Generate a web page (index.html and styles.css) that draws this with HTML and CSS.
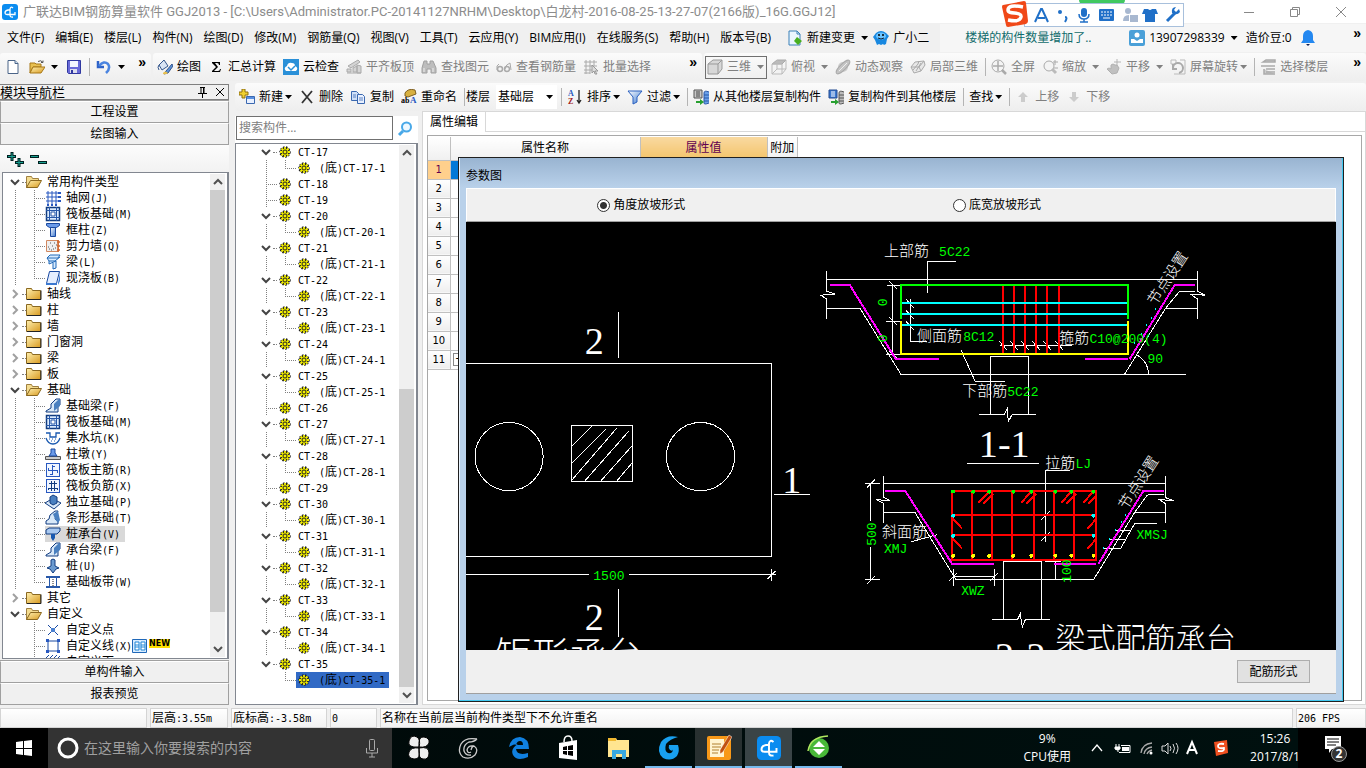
FILE: index.html
```html
<!DOCTYPE html>
<html lang="zh-CN">
<head>
    <meta charset="UTF-8">
    <meta name="viewport" content="width=device-width, initial-scale=1.0">
    <title>广联达BIM钢筋算量软件 GGJ2013</title>
    <link rel="stylesheet" href="styles.css">
</head>
<body>

    <!-- Icon sprite -->
    <svg class="sprite" width="0" height="0">
        <linearGradient id="gold" x1="0" y1="0" x2="1" y2="1"><stop offset="0" stop-color="#fff0b0"/><stop offset="1" stop-color="#d89a20"/></linearGradient>
        <linearGradient id="blue" x1="0" y1="0" x2="1" y2="1"><stop offset="0" stop-color="#fff"/><stop offset="1" stop-color="#3a78d0"/></linearGradient>
        <symbol id="logo" viewBox="0 0 16 16"><rect width="16" height="16" rx="3" fill="#0a8cf0"/><path d="M11 4Q8.500 2 8 5v6q0 2.500 3 2M8 6H6Q3 6.500 3 9q0 1.500 2 1.500h8V8" fill="none" stroke="#fff" stroke-width="1.300"/></symbol>
        <symbol id="new" viewBox="0 0 16 16"><path d="M3 1.500h7l3 3v10H3z" fill="#fff" stroke="#4a6488"/><path d="M10 1.500v3h3" fill="#cfe0f4" stroke="#4a6488"/></symbol>
        <symbol id="open" viewBox="0 0 16 16"><path d="M1 4h5l1 1h5v3H4l-3 6z" fill="#e8c050" stroke="#a87818"/><path d="M4 8h12l-4 6H1z" fill="url(#gold)" stroke="#a87818"/><path d="M9 2.500q3-2 5 1m0-2v2h-2" fill="none" stroke="#555"/></symbol>
        <symbol id="save" viewBox="0 0 16 16"><path d="M1.500 1.500h13v13h-12l-1-1z" fill="#6a6ad8" stroke="#3038a0"/><path d="M4 2h8v6H4z" fill="#f4f6ff"/><path d="M4 10h7v4H4z" fill="#dde"/><path d="M5 11h2v3H5z" fill="#3038a0"/></symbol>
        <symbol id="undo" viewBox="0 0 16 16"><path d="M2 2v6h6" fill="none" stroke="#2d62c8" stroke-width="2.500"/><path d="M3 7q5-6 9-2 3 4-2 9" fill="none" stroke="#4a84e0" stroke-width="2.500"/></symbol>
        <symbol id="paint" viewBox="0 0 16 16"><path d="M2 6l5-5 4 6-6 4z" fill="#d8e4f4" stroke="#34568c"/><path d="M2 6q-2 2 0 5" fill="none" stroke="#34568c"/><path d="M15 5l-6 7-2 3 4-1 5-7z" fill="#5a90d8" stroke="#34568c"/><path d="M6 14q2-3 5 0-2 2-5 1z" fill="#e8c050"/></symbol>
        <symbol id="sigma" viewBox="0 0 16 16"><path d="M4 3h8v3h-1q0-2-2-2H7l3 4-4 4h4q2 0 2-2h1l-1 3H4v-1l4-4-4-4z"/></symbol>
        <symbol id="cloud" viewBox="0 0 16 16"><rect width="16" height="16" fill="#2a90d8"/><path d="M3 12q-3-3 1-5 1-4 5-3 3 0 3 3 4 2 1 5z" fill="#fff"/><path d="M5 8l3 3 4-4" fill="none" stroke="#2a90d8" stroke-width="1.500"/></symbol>
        <symbol id="slab" viewBox="0 0 16 16"><path d="M2 7l10-6 2 2-9 6zM1 10h4v3H1zM7 9l4-2v6H7zM11 6l4 1v7h-4zM1 14h14" fill="#d4d4d4" stroke="#aaa"/></symbol>
        <symbol id="bino" viewBox="0 0 16 16"><path d="M3 2h3v3h3V2h3l3 7v5h-5v-4H6v4H1V9z" fill="#bdbdbd" stroke="#a0a0a0"/><path d="M3 9v4m9-4v4" stroke="#eee"/></symbol>
        <symbol id="glasses" viewBox="0 0 16 16"><path d="M3 5q-3 1-2 6m8-1q1-5 5-6l1 7" fill="none" stroke="#aaa"/><circle cx="4" cy="10" r="2.500" fill="none" stroke="#aaa" stroke-width="1.500"/><circle cx="11" cy="10" r="2.500" fill="none" stroke="#aaa" stroke-width="1.500"/></symbol>
        <symbol id="gridsel" viewBox="0 0 16 16"><path d="M1 3h13M1 7h13M1 11h8M1 14h6M3 1v14M7 1v14M11 1v6" stroke="#aaa" fill="none"/><path d="M9 6l6 6-3 0 2 3-2 0-1-3-2 2z" fill="#ddd" stroke="#999"/></symbol>
        <symbol id="cube" viewBox="0 0 16 16"><path d="M1 5l5-4h9v9l-4 5H1z" fill="#d8d8d8" stroke="#999"/><path d="M1 5h10v10M11 5l4-4" fill="none" stroke="#999"/></symbol>
        <symbol id="cubetop" viewBox="0 0 16 16"><path d="M1 5l5-4h9l-4 4z" fill="#bbb" stroke="#aaa"/><path d="M1 5h10v10H1zM15 1v9l-4 5M6 1v9h9M6 10l-5 5" fill="none" stroke="#bbb"/></symbol>
        <symbol id="orbit" viewBox="0 0 16 16"><circle cx="8" cy="8" r="5" fill="#ccc"/><ellipse cx="8" cy="8" rx="9" ry="3" transform="rotate(-45 8 8)" fill="#c4c4c4" stroke="#aaa"/><path d="M4 12l8-8" stroke="#eee"/></symbol>
        <symbol id="part" viewBox="0 0 16 16"><path d="M1 8l4-5 9-1 1 4-4 6-7 2z" fill="#e8e8e8" stroke="#aaa"/><path d="M3 11l5-6 1-3M6 12l5-8M1 8h8l5-6M9 8l2 4" fill="none" stroke="#aaa"/></symbol>
        <symbol id="full" viewBox="0 0 16 16"><circle cx="7" cy="7" r="6" fill="#f4f4f4" stroke="#aaa"/><path d="M7 2v10M2 7h10" stroke="#aaa" stroke-width="1.500"/><path d="M11 11l4 4" stroke="#aaa" stroke-width="2.500"/></symbol>
        <symbol id="zoomi" viewBox="0 0 16 16"><circle cx="7" cy="7" r="5" fill="#f4f4f4" stroke="#aaa"/><path d="M10 10l4 4" stroke="#bbb" stroke-width="3"/><path d="M11 3h5M13 1v5M12 9h4" stroke="#aaa"/></symbol>
        <symbol id="hand" viewBox="0 0 16 16"><path d="M1 10l2-1 2 1V6l2-1 2 1 2 0 2 3-2 5-5 1z" fill="#c0c0c0" stroke="#b0b0b0"/><path d="M11 0v7M8 3h7" stroke="#b4b4b4"/></symbol>
        <symbol id="rotate" viewBox="0 0 16 16"><path d="M1 1h5v4H1zM10 1h5v14H4" fill="none" stroke="#bbb"/><path d="M3 9a5 5 0 1 1 6 5M3 5v5h4" fill="none" stroke="#aaa" stroke-width="2"/></symbol>
        <symbol id="floors" viewBox="0 0 16 16"><path d="M3 3l3-2h9v2zM1 7h3M4 7h11M6 10h9M4 10v5h11M6 13h9" fill="#ccc" stroke="#aaa" stroke-width="1.500"/></symbol>
        <symbol id="add" viewBox="0 0 16 16"><path d="M3 0h3v3h3v3H6v3H3V6H0V3h3z" fill="#f0d030" stroke="#907010"/><path d="M7.500 7.500h8v7h-8z" fill="#e8f0ff" stroke="#3a68b0"/><path d="M8 8h7v2H8z" fill="#5a90e0"/></symbol>
        <symbol id="del" viewBox="0 0 16 16"><path d="M3 2l10 12M13 2L3 14" stroke="#333" stroke-width="1.800"/></symbol>
        <symbol id="copy" viewBox="0 0 16 16"><path d="M1.500 2.500h5l2 2v7h-7z" fill="#cfe0f8" stroke="#3a68b0"/><path d="M7.500 5.500h5l2 2v7h-7z" fill="#e8f0ff" stroke="#3a68b0"/><path d="M9 9h4M9 11h4M3 6h3M3 8h3" stroke="#5a80c0"/></symbol>
        <symbol id="rename" viewBox="0 0 16 16"><path d="M4 4q3-5 10-3l1 4-8 3-3-1z" fill="#d8b040" stroke="#806020"/><text x="0" y="14" font-size="8" font-weight="bold" font-family="Liberation Serif, serif">ab</text><text x="9" y="14" font-size="9" font-weight="bold" fill="#2858c0" font-family="Liberation Serif, serif">A</text></symbol>
        <symbol id="sort" viewBox="0 0 16 16"><text x="1" y="7" font-size="8" font-weight="bold" fill="#2858c0" font-family="Liberation Serif, serif">A</text><text x="1" y="15" font-size="8" font-weight="bold" fill="#a02020" font-family="Liberation Serif, serif">Z</text><path d="M12 1v13M10 11l2 3 2-3" fill="none" stroke="#222" stroke-width="1.300"/></symbol>
        <symbol id="filter" viewBox="0 0 16 16"><path d="M1 2h14l-5 6v5l-4 2V8z" fill="url(#blue)" stroke="#2a60c0"/></symbol>
        <symbol id="cfrom" viewBox="0 0 16 16"><path d="M1 1h8v8H1z" fill="#c8c8c8" stroke="#555"/><path d="M3 3h4M3 5h4M3 7h4" stroke="#444"/><path d="M16 3q-5-2-5 1v10q0 2 5 0M11 6h5M11 9h5M11 12h5" fill="#6aa0e8" stroke="#2858a8"/><path d="M3 12h4v-2l4 3-4 3v-2H3z" fill="#28a030"/></symbol>
        <symbol id="cto" viewBox="0 0 16 16"><path d="M1 1h8v8H1z" fill="#3a78d0" stroke="#224a90"/><path d="M3 3h4M3 5h4M3 7h4" stroke="#fff"/><path d="M16 3q-5-2-5 1v10q0 2 5 0M11 6h5M11 9h5M11 12h5" fill="#bbb" stroke="#555"/><path d="M3 12h4v-2l4 3-4 3v-2H3z" fill="#28a030"/></symbol>
        <symbol id="up" viewBox="0 0 16 16"><path d="M8 3l5 5h-3v5H6V8H3z" fill="#ccc"/></symbol>
        <symbol id="down" viewBox="0 0 16 16"><path d="M8 13l5-5h-3V3H6v5H3z" fill="#ccc"/></symbol>
        <symbol id="change" viewBox="0 0 16 16"><path d="M2 1h8l3 3v11H2z" fill="#eaf6ff" stroke="#3a80b8"/><path d="M10 1v3h3" fill="none" stroke="#3a80b8"/><path d="M10 7l5 4-4 4-4-4z" fill="#48b020"/></symbol>
        <symbol id="robot" viewBox="0 0 16 16"><path d="M3 3q5-4 10 0l3 3-2 3-1 5-2 1-1-1-2 1-2-1-2 1-2-5-2-3z" fill="#1888e0"/><ellipse cx="8" cy="6" rx="5" ry="3.500" fill="#6cc4ff"/><circle cx="6" cy="5" r="1"/><circle cx="10" cy="5" r="1"/><path d="M5 8q3 2 6 0" fill="none" stroke="#123"/></symbol>
        <symbol id="user" viewBox="0 0 16 16"><rect width="16" height="16" rx="2" fill="#4aa0d8"/><circle cx="8" cy="5" r="2.500" fill="#fff"/><path d="M2 13V9h3l3 2 3-2h3v4z" fill="#fff"/></symbol>
        <symbol id="bell" viewBox="0 0 16 16"><path d="M8 0q5 1 5 6v4l2 3H1l2-3V6q0-5 5-6z" fill="#2488f0"/><path d="M6 14h4l-2 2z" fill="#125"/></symbol>
        <symbol id="search" viewBox="0 0 16 16"><circle cx="9.500" cy="6" r="4.500" fill="#eef8ff" stroke="#48a8e8" stroke-width="2"/><path d="M6 10l-4 4" stroke="#48a8e8" stroke-width="3"/></symbol>
        <symbol id="chev-open" viewBox="0 0 14 16"><path d="M3 6l4 4 4-4" fill="none" stroke="#444" stroke-width="2"/></symbol>
        <symbol id="chev-shut" viewBox="0 0 14 16"><path d="M5 4l4 4-4 4" fill="none" stroke="#a0a0a0" stroke-width="2"/></symbol>
        <symbol id="folder-shut" viewBox="0 0 16 16"><path d="M.5 2.500h5l1 2h8v9H.5z" fill="url(#gold)" stroke="#8a6820"/><path d="M1 13.500h14v-9" fill="none" stroke="#222"/></symbol>
        <symbol id="folder-open" viewBox="0 0 16 16"><path d="M.5 2.500h5l1 2h6v3h-8l-4 6z" fill="#f4dc90" stroke="#a08040"/><path d="M4.500 6.500h11l-4 7H.5z" fill="url(#gold)" stroke="#8a6820"/></symbol>
        <symbol id="gear" viewBox="0 0 16 16"><circle cx="8" cy="8" r="5" fill="#222" stroke="#222" stroke-width="1.500" stroke-dasharray="1.500 1.500"/><path d="M8 3v10M3 8h10M4.500 4.500l7 7M11.500 4.500l-7 7" stroke="#f4f000" stroke-width="1.800"/><circle cx="8" cy="8" r="2" fill="#f4f000" stroke="#222"/></symbol>
        <symbol id="i-axis" viewBox="0 0 16 16"><path d="M1 3h14M1 7h14M1 11h14M3 1v14M7 1v14M11 1v14" stroke="#2858c0" fill="none"/><path d="M13 2h3v2h-3zM13 6h3v2h-3zM13 10h3v2h-3zM2 14h2v2H2zM6 14h2v2H6zM10 14h2v2h-2z" fill="#2858c0"/></symbol>
        <symbol id="i-raft" viewBox="0 0 16 16"><rect x="1.500" y="1.500" width="13" height="13" fill="#dcecff" stroke="#123c80" stroke-width="1.500"/><path d="M4.500 1v14M11.500 1v14M1 4.500h14M1 11.500h14" stroke="#2858a8"/><path d="M6 6h4v4H6z" fill="#fff" stroke="#2858a8"/></symbol>
        <symbol id="i-col" viewBox="0 0 16 16"><path d="M1.500 1.500h13v2l-3 2h-7l-3-2z" fill="#6a9ae8" stroke="#1848a0"/><path d="M5.500 5.500h5v9h-5z" fill="url(#blue)" stroke="#1848a0"/></symbol>
        <symbol id="i-wall" viewBox="0 0 16 16"><path d="M1.500 2.500h12v11h-12z" fill="#eee" stroke="#d08860"/><path d="M3 9h1M5 5h1M7 8h1M9 5h1M11 7h1M4 11h1M8 11h1M10 10h1M6 12h1" stroke="#555"/><path d="M13 2v12M15 4h-3M15 8h-3M15 12h-3" stroke="#d06830" stroke-width="1.500"/></symbol>
        <symbol id="i-beam" viewBox="0 0 16 16"><path d="M2 4l3-3h10l-2 3zM2 4l2 3h6l5-4M4 7v3l7-3M8 9v6l3-1V7" fill="#d8ecff" stroke="#2068b8"/></symbol>
        <symbol id="i-slab" viewBox="0 0 16 16"><path d="M4.500 1.500h10l-3 12h-10z" fill="#e4eeff" stroke="#1848a0"/><path d="M1 13h11v2H1zM13 13l2-10v8l-2 4z" fill="#3a78d0"/></symbol>
        <symbol id="i-fbeam" viewBox="0 0 16 16"><path d="M1 14h12V9l2-2V1h-4L6 6v4l-5 3z" fill="#d8e8f8" stroke="#123c80"/><path d="M9 6l5-5 1 1v6l-6 5z" fill="#4a80c0"/></symbol>
        <symbol id="i-pit" viewBox="0 0 16 16"><path d="M1 3h4v4h6V3h4M1 8q2 6 7 6t7-6" fill="none" stroke="#1858b0" stroke-width="1.300"/><path d="M4 9h1M7 9h1M10 9h1M6 11h1M9 11h1" stroke="#1858b0"/></symbol>
        <symbol id="i-pier" viewBox="0 0 16 16"><path d="M.5 10.500h15v3H.5z" fill="#ccc" stroke="#555"/><path d="M4 10l2-3V3h4v4l2 3z" fill="#6a9ae8" stroke="#1848a0"/></symbol>
        <symbol id="i-main" viewBox="0 0 16 16"><rect x="1.500" y="1.500" width="13" height="13" fill="#f0f6ff" stroke="#2858c0"/><path d="M7.500 3v10M3 8.500h10M3.500 6v3M12.500 8v3M8 4.500h2M5 12.500h2" stroke="#2858c0" fill="none"/></symbol>
        <symbol id="i-neg" viewBox="0 0 16 16"><rect x="1.500" y="1.500" width="13" height="13" fill="#f0f6ff" stroke="#2858c0"/><path d="M4 5.500h8M3 10.500h10M3.500 10v2M12.500 10v2M6.500 3v10M9.500 3v10" stroke="#123c80" fill="none"/></symbol>
        <symbol id="i-iso" viewBox="0 0 16 16"><path d="M0 9l5-3h5l6 3-7 6z" fill="#d8e8f8" stroke="#123c80"/><path d="M5 3l3-2 4 2v6L8 11 5 9z" fill="#4a80c0" stroke="#123c80"/></symbol>
        <symbol id="i-strip" viewBox="0 0 16 16"><path d="M1 14v-3l3-2 1-4 5-4h3l-3 8 3 2v3z" fill="#d8e8f8" stroke="#123c80"/><path d="M8 4l5-3 2 9-2 3-3-4z" fill="#4a80c0"/></symbol>
        <symbol id="i-cap" viewBox="0 0 16 16"><path d="M1 4l3-2h11v3l-3 3H1z" fill="#a8c8f0" stroke="#123c80"/><path d="M6 8h4v4l-2 3-2-3z" fill="#1858b0"/></symbol>
        <symbol id="i-pile" viewBox="0 0 16 16"><path d="M6 2q2-2 4 0v6l4 2-3 1-3 4-3-4-3-1 4-2z" fill="#6a9ad0" stroke="#123c80"/></symbol>
        <symbol id="i-band" viewBox="0 0 16 16"><path d="M1 3h14M1 13h14" stroke="#2858a8" stroke-width="2"/><path d="M4.500 4v8M11.500 4v8" stroke="#2858a8"/><path d="M8 5v7" stroke="#222" stroke-dasharray="1 1"/></symbol>
        <symbol id="i-point" viewBox="0 0 16 16"><path d="M3 3l10 10M13 3L3 13" stroke="#1848a0"/><path d="M6 6h4v4H6z" fill="#4a80d0"/></symbol>
        <symbol id="i-line" viewBox="0 0 16 16"><path d="M3 3h10v10H3z" fill="none" stroke="#1848a0"/><path d="M1 1h3v3H1zM12 1h3v3h-3zM1 12h3v3H1zM12 12h3v3h-3z" fill="#2858c0"/></symbol>
        <symbol id="i-face" viewBox="0 0 16 16"><path d="M1 4l3-3M5 4l3-3M9 4l3-3M13 4l2-2" stroke="#1848a0"/></symbol>
    </svg>

    <header class="titlebar">
        <svg class="ico"><use href="#logo"/></svg>
        <span class="caption">广联达BIM钢筋算量软件 GGJ2013 - [C:\Users\Administrator.PC-20141127NRHM\Desktop\白龙村-2016-08-25-13-27-07(2166版)_16G.GGJ12]</span>
        <button class="win-btn" aria-label="最小化"><svg width="12" height="12"><path d="M1 6.500h10" stroke="#888"/></svg></button>
        <button class="win-btn" aria-label="还原"><svg width="12" height="12"><path d="M1.500 3.500h7v7h-7zM3.500 3V1.500h7v7H9" fill="none" stroke="#888"/></svg></button>
        <button class="win-btn" aria-label="关闭"><svg width="12" height="12"><path d="M1 1l10 10M11 1L1 11" stroke="#888"/></svg></button>
        <div class="blob"></div>
        <div class="ime">
            <svg class="ime-logo" width="28" height="28" viewBox="0 0 28 28"><path d="M2 5l21-4q2 0 2 2l2 18q0 2-2 3L7 27q-2 0-2-2L1 7q0-2 1-2z" fill="#f04818"/><path d="M22 7Q7 4 7 10c0 5 14 1 13 7-1 5-8 4-13 3" fill="none" stroke="#fff" stroke-width="3.500"/></svg>
            <svg width="150" height="20" viewBox="0 0 150 20">
                <path d="M2 17L8 4h1l6 13M5 13h7" fill="none" stroke="#2070c8" stroke-width="2"/>
                <circle cx="27" cy="7" r="2" fill="#2070c8"/><path d="M32 12q3 0 0 5" fill="none" stroke="#2070c8" stroke-width="2"/>
                <rect x="48" y="3" width="6" height="9" rx="3" fill="#2070c8"/><path d="M46 9q0 5 5 5t5-5M51 14v3M47 17h8" fill="none" stroke="#2070c8" stroke-width="1.500"/>
                <rect x="66" y="4" width="15" height="12" rx="1" fill="#2070c8"/><path d="M68 7h11M68 10h11" stroke="#fff" stroke-dasharray="2 1"/><path d="M70 13h7" stroke="#fff"/>
                <circle cx="95" cy="6" r="3" fill="#a8b8d0"/><path d="M90 16q0-6 6-6v6zM97 10h8v7h-8z" fill="#a8b8d0"/>
                <path d="M111 4h4q2 2 4 0h4l2 5h-3v8h-10V9h-3z" fill="#2070c8"/>
                <path d="M134 16l8-8" stroke="#2070c8" stroke-width="3"/><path d="M146 4l-3 3-2-2 2-3q-5 0-4 6 5 3 8-1z" fill="#2070c8"/>
            </svg>
        </div>
    </header>

    <nav class="menubar">
        <button>文件(F)</button><button>编辑(E)</button><button>楼层(L)</button><button>构件(N)</button><button>绘图(D)</button><button>修改(M)</button><button>钢筋量(Q)</button><button>视图(V)</button><button>工具(T)</button><button>云应用(Y)</button><button>BIM应用(I)</button><button>在线服务(S)</button><button>帮助(H)</button><button>版本号(B)</button>
        <button class="tool change"><svg class="ico"><use href="#change"/></svg>新建变更<i class="caret"></i></button>
        <button class="tool"><svg class="ico"><use href="#robot"/></svg>广小二</button>
        <div class="account">
            <a href="#" class="news">楼梯的构件数量增加了..</a>
            <button class="tool phone"><svg class="ico"><use href="#user"/></svg>13907298339<i class="caret"></i></button>
            <button>造价豆:0</button>
            <button class="bell" aria-label="消息"><svg class="ico"><use href="#bell"/></svg></button>
            <span class="more">»</span>
        </div>
    </nav>

    <div class="toolbars">
        <div class="toolbar bar-file">
            <button class="tool" aria-label="新建"><svg class="ico"><use href="#new"/></svg></button>
            <button class="tool" aria-label="打开"><svg class="ico"><use href="#open"/></svg><i class="caret"></i></button>
            <button class="tool" aria-label="保存"><svg class="ico"><use href="#save"/></svg></button>
            <i class="sep"></i>
            <button class="tool" aria-label="撤销"><svg class="ico"><use href="#undo"/></svg><i class="caret"></i></button>
            <span class="more">»</span>
        </div>
        <div class="toolbar bar-draw">
            <button class="tool"><svg class="ico"><use href="#paint"/></svg>绘图</button>
            <button class="tool"><svg class="ico"><use href="#sigma"/></svg>汇总计算</button>
            <button class="tool"><svg class="ico"><use href="#cloud"/></svg>云检查</button>
            <button class="tool off"><svg class="ico"><use href="#slab"/></svg>平齐板顶</button>
            <button class="tool off"><svg class="ico"><use href="#bino"/></svg>查找图元</button>
            <button class="tool off"><svg class="ico"><use href="#glasses"/></svg>查看钢筋量</button>
            <button class="tool off"><svg class="ico"><use href="#gridsel"/></svg>批量选择</button>
            <span class="more">»</span>
        </div>
        <div class="toolbar bar-view">
            <button class="tool off boxed"><svg class="ico"><use href="#cube"/></svg>三维<i class="caret"></i></button>
            <button class="tool off"><svg class="ico"><use href="#cubetop"/></svg>俯视<i class="caret"></i></button>
            <button class="tool off"><svg class="ico"><use href="#orbit"/></svg>动态观察</button>
            <button class="tool off"><svg class="ico"><use href="#part"/></svg>局部三维</button>
            <i class="sep"></i>
            <button class="tool off"><svg class="ico"><use href="#full"/></svg>全屏</button>
            <button class="tool off"><svg class="ico"><use href="#zoomi"/></svg>缩放<i class="caret"></i></button>
            <button class="tool off"><svg class="ico"><use href="#hand"/></svg>平移<i class="caret"></i></button>
            <button class="tool off tight"><svg class="ico"><use href="#rotate"/></svg>屏幕旋转<i class="caret"></i></button>
            <i class="sep"></i>
            <button class="tool off"><svg class="ico"><use href="#floors"/></svg>选择楼层</button>
            <span class="more">»</span>
        </div>
    </div>

    <div class="workspace">
        <!-- Module navigation -->
        <aside class="nav-panel">
            <div class="nav-head"><span>模块导航栏</span>
                <svg width="28" height="12"><path d="M3 1.500h5M4 1v6M7 1v6M6.500 1v6M1 7.500h9M5.500 8v4M19 2l8 8M27 2l-8 8" fill="none" stroke="#000"/></svg>
            </div>
            <button class="nav-btn">工程设置</button>
            <button class="nav-btn">绘图输入</button>
            <div class="nav-tools">
                <svg width="40" height="16"><path d="M5 0v9M0 4.500h9M12 6v9M8 10.500h9M23 4.500h9M31 10.500h9" stroke="#002020" stroke-width="3"/><path d="M5 1v7M1 4.500h7M12 7v7M9 10.500h7M24 4.500h7M32 10.500h7" stroke="#18a090"/></svg>
            </div>
            <div class="tree-box">
                <ul class="tree" id="nav-tree"></ul>
                <div class="scroll nav-scroll"><svg width="15" height="16"><path d="M4 10l4-4 4 4" fill="none" stroke="#505050" stroke-width="2"/></svg><div class="thumb"></div><svg width="15" height="16"><path d="M4 6l4 4 4-4" fill="none" stroke="#505050" stroke-width="2"/></svg></div>
            </div>
            <button class="nav-btn">单构件输入</button>
            <button class="nav-btn">报表预览</button>
        </aside>

        <div class="right-side">
            <div class="toolbar bar-comp">
                <button class="tool tight"><svg class="ico"><use href="#add"/></svg>新建<i class="caret"></i></button>
                <button class="tool"><svg class="ico"><use href="#del"/></svg>删除</button>
                <button class="tool"><svg class="ico"><use href="#copy"/></svg>复制</button>
                <button class="tool"><svg class="ico"><use href="#rename"/></svg>重命名</button>
                <i class="sep"></i>
                <label for="floor">楼层</label>
                <span class="combo"><select id="floor"><option>基础层</option><option>首层</option></select><i class="caret"></i></span>
                <i class="sep"></i>
                <button class="tool tight"><svg class="ico"><use href="#sort"/></svg>排序<i class="caret"></i></button>
                <button class="tool tight"><svg class="ico"><use href="#filter"/></svg>过滤<i class="caret"></i></button>
                <i class="sep"></i>
                <button class="tool"><svg class="ico"><use href="#cfrom"/></svg>从其他楼层复制构件</button>
                <button class="tool"><svg class="ico"><use href="#cto"/></svg>复制构件到其他楼层</button>
                <i class="sep"></i>
                <button class="tool tight">查找<i class="caret"></i></button>
                <i class="sep"></i>
                <button class="tool off"><svg class="ico"><use href="#up"/></svg>上移</button>
                <button class="tool off"><svg class="ico"><use href="#down"/></svg>下移</button>
            </div>

            <div class="panels">
                <section class="comp-panel">
                    <div class="search-row">
                        <input type="text" placeholder="搜索构件..." aria-label="搜索构件">
                        <button aria-label="搜索"><svg class="ico"><use href="#search"/></svg></button>
                    </div>
                    <div class="tree-box">
                        <ul class="tree" id="comp-tree"></ul>
                        <div class="scroll comp-scroll"><svg width="15" height="16"><path d="M4 10l4-4 4 4" fill="none" stroke="#505050" stroke-width="2"/></svg><div class="thumb"></div><svg width="15" height="16"><path d="M4 6l4 4 4-4" fill="none" stroke="#505050" stroke-width="2"/></svg></div>
                    </div>
                </section>

                <section class="prop-panel">
                    <div class="tabs"><button class="tab">属性编辑</button></div>
                    <div class="prop-box">
                        <table class="props">
                            <thead><tr><th class="num"></th><th class="name">属性名称</th><th class="val">属性值</th><th class="ext">附加</th></tr></thead>
                            <tbody id="prop-rows"></tbody>
                        </table>
                    </div>

                    <!-- Parameter drawing window -->
                    <div class="dialog" role="dialog" aria-label="参数图">
                        <div class="dialog-title">参数图</div>
                        <div class="radios">
                            <label><input type="radio" name="slope" checked>角度放坡形式</label>
                            <label><input type="radio" name="slope">底宽放坡形式</label>
                        </div>
                        <svg class="drawing" viewBox="466 222 870 427" preserveAspectRatio="xMidYMin slice">
                            <!-- plan -->
                            <g class="w">
                                <path d="M466 363H772V556H466M619 312V358M619 588V636M774 494H810M572 425H633V481H572zM466 574H590M630 574H776M772 568V580M768 578L776 570"/>
                                <path class="thin" d="M572 446L593 425M572 463L607 428M573 479L618 427M585 481L630 430M601 481L633 445M617 481L633 462"/>
                                <circle class="thin" cx="510" cy="456" r="34"/><circle class="thin" cx="701" cy="456" r="34"/>
                            </g>
                            <g class="big">
                                <text x="595" y="354">2</text><text x="792" y="492">1</text><text x="595" y="629">2</text>
                                <text x="1004" y="456">1-1</text><text x="1020" y="668">2-2</text>
                            </g>
                            <text class="zh title" x="496" y="668">矩形承台</text>
                            <text class="zh title2" x="1055" y="648">梁式配筋承台</text>
                            <text class="en" x="594" y="579">1500</text>

                            <!-- section 1-1 -->
                            <g class="w">
                                <path d="M827 279H1197M956 261H927V293M827 308H860M901 374H1185M1165 308H1197M1179 291H1194M990 414V356H1028V414M910 299V341H927M1000 345H1072M893 285V354M887 285H901M886 321H901M886 354H901M967 463H1039M975 381H1005"/>
                                <path class="thin" d="M827 271V291L835 294L821 295L827 299V319M1197 271V291L1204 295L1190 294L1197 299V319M860 308L901 374M1124 374L1165 308L1179 291M979 414H1004L1007 408L1008 421L1012 414H1036M961 350L975 381M1137 355Q1148 362 1148 374M889 281L897 289M889 317L897 325M889 350L897 358"/>
                                <path class="thin" d="M906 299L914 308M906 310L914 319M906 321L914 330M999 341L1007 350M1010 341L1018 350M1021 341L1029 350M1032 341L1040 350M1043 341L1051 350M1055 341L1063 350"/>
                            </g>
                            <path class="m" d="M830 285H850L896 359H939M1085 359H1127M1129 359L1174 285H1194"/>
                            <path class="r" d="M1003 286V354M1014 286V354M1025 286V354M1036 286V354M1047 286V354M1059 286V354"/>
                            <path class="c" d="M902 303H1127M902 314H1127M902 325H1127"/>
                            <path class="g" d="M901 319V285H1127V319"/>
                            <path class="y" d="M901 321V354H1127V321"/>
                            <g class="dots-c"><circle cx="1155" cy="309" r="1"/><circle cx="1151" cy="318" r="1"/><circle cx="1146" cy="325" r="1"/><circle cx="1141" cy="334" r="1"/><circle cx="1134" cy="343" r="1"/></g>
                            <g class="zh">
                                <text x="884" y="256">上部筋</text><text x="917" y="341">侧面筋</text><text x="1059" y="343">箍筋</text><text x="962" y="396">下部筋</text>
                                <text transform="translate(1155 306) rotate(-57)">节点设置</text>
                            </g>
                            <g class="en">
                                <text x="939" y="256">5C22</text><text x="963" y="341">8C12</text><text x="1089" y="343">C10@200(4)</text><text x="1007" y="396">5C22</text><text x="1147" y="363">90</text>
                                <text transform="translate(887 306) rotate(-90)">0</text><text transform="translate(887 342) rotate(-90)">0</text>
                            </g>

                            <!-- section 2-2 -->
                            <g class="w">
                                <path d="M884 483H1165M1070 470H1045V541M884 512H915M956 579H1093M1134 512H1165M1147 494H1163M1003 619V561H1041V619M871 484V520M871 546V579M865 483H880M865 579H880M953 568V585M994 568V585M953 576H994M1045 561H1061M1055 561V579"/>
                                <path class="thin" d="M884 475V497L890 500L876 499L884 503V522M1165 475V497L1173 500L1159 499L1165 503V522M915 512L956 579M1093 579L1134 512L1147 494M992 619H1017L1020 613L1022 626L1025 619H1050M911 541L937 534M1104 548H1120L1134 523H1156M1109 539H1125M1115 530H1130M1041 519L1050 510M1041 540L1050 531M949 580L957 572M990 580L998 572M867 487L875 479M867 583L875 575"/>
                            </g>
                            <path class="m" d="M885 490H905L952 563H994M1054 563H1096M1098 563L1143 490H1163"/>
                            <path class="r" d="M952 490H1096V559H952zM972 490V559M992 490V559M1012 490V559M1034 490V559M1054 490V559M1074 490V559M952 514H1096M952 534H1096"/>
                            <path class="r hook" d="M988 492L978 502M993 493L983 503M1030 492L1021 502M1036 493L1026 503M1070 492L1061 502M1076 493L1066 503M1092 492L1083 502M1095 496L1088 503M953 518L962 528M953 538L962 548M1096 518L1087 528M1096 538L1087 548"/>
                            <g class="dots-g"><circle cx="953" cy="491" r="2"/><circle cx="973" cy="491" r="2"/><circle cx="989" cy="491" r="2"/><circle cx="1013" cy="491" r="2"/><circle cx="1031" cy="491" r="2"/><circle cx="1055" cy="491" r="2"/><circle cx="1071" cy="491" r="2"/><circle cx="1093" cy="491" r="2"/></g>
                            <g class="dots-y"><circle cx="953" cy="555" r="2"/><circle cx="973" cy="555" r="2"/><circle cx="989" cy="555" r="2"/><circle cx="1013" cy="555" r="2"/><circle cx="1031" cy="555" r="2"/><circle cx="1055" cy="555" r="2"/><circle cx="1071" cy="555" r="2"/><circle cx="1093" cy="555" r="2"/></g>
                            <g class="dots-c"><circle cx="953" cy="515" r="2"/><circle cx="953" cy="535" r="2"/><circle cx="1093" cy="515" r="2"/><circle cx="1093" cy="535" r="2"/><circle cx="1125" cy="514" r="1"/><circle cx="1121" cy="521" r="1"/><circle cx="1115" cy="529" r="1"/><circle cx="1109" cy="538" r="1"/><circle cx="1103" cy="547" r="1"/></g>
                            <g class="zh">
                                <text x="1045" y="467">拉筋</text><text x="882" y="536">斜面筋</text>
                                <text transform="translate(1126 510) rotate(-57)">节点设置</text>
                            </g>
                            <g class="en">
                                <text x="1075" y="467">LJ</text><text x="884" y="552">XMJ</text><text x="961" y="594">XWZ</text><text x="1136" y="538">XMSJ</text>
                                <text transform="translate(876 545) rotate(-90)">500</text><text transform="translate(1071 582) rotate(-90)">100</text>
                            </g>
                        </svg>
                        <div class="dialog-foot"><button>配筋形式</button></div>
                    </div>
                </section>
            </div>
        </div>
    </div>

    <footer class="statusbar">
        <span class="s1"></span><span class="s2">层高<b>:3.55m</b></span><span class="s3">底标高<b>:-3.58m</b></span><span class="s4"><b>0</b></span><span class="s5">名称在当前层当前构件类型下不允许重名</span><span class="s6"><b>206 FPS</b></span>
    </footer>

    <div class="taskbar">
        <button class="start" aria-label="开始"><svg width="16" height="16"><path d="M0 2l7-1v7H0zM8 1l8-1v8H8zM0 9h7v6l-7-1zM8 9h8v7l-8-1z" fill="#fff"/></svg></button>
        <label class="cortana">
            <svg width="22" height="28" viewBox="0 0 22 28"><circle cx="11" cy="14" r="9" fill="none" stroke="#fff" stroke-width="3"/></svg>
            <input type="text" placeholder="在这里输入你要搜索的内容">
            <svg width="12" height="22" viewBox="0 0 12 22"><rect x="3.500" y="2.500" width="5" height="11" rx="1" fill="none" stroke="#aaa"/><path d="M.5 11v5h11v-5M6 16v4M3 20h6" fill="none" stroke="#aaa"/></svg>
        </label>
        <button class="app" aria-label="Sogou"><svg width="24" height="28" viewBox="0 0 24 28"><path d="M12 13Q0 14 2 7t8-4q4 3 2 10zM12 13Q11 2 17 3t5 6q-2 5-10 4zM12 14q10-2 10 5t-6 6q-5 0-4-11zM12 14q2 12-5 11t-5-7q2-5 10-4z" fill="#eee" stroke="#000"/></svg></button>
        <button class="app" aria-label="G"><svg width="24" height="26" viewBox="0 0 24 26"><path d="M20 4Q8 2 4 9q-4 8 2 13 7 3 12-2 4-6-1-9-6-1-7 4 1 4 4 2M20 4q-3 3-8 3-6 3-5 9 2 5 7 4M17 11q-2 0-3 4" fill="none" stroke="#ccc" stroke-width="1.300"/></svg></button>
        <button class="app edge" aria-label="Edge"><svg width="22" height="26" viewBox="0 0 22 26"><path d="M1 12Q3 2 12 2q9 1 9 12H8q1 7 12 4v4Q9 27 5 20 2 14 10 9q-5 0-9 3zM8 10h7q0-4-3-4-3 0-4 4z" fill="#1080e0"/></svg></button>
        <button class="app" aria-label="Store"><svg width="24" height="28" viewBox="0 0 24 28"><path d="M2 9l18-3v20L2 24z" fill="#fff"/><path d="M7 8q0-6 4-6t4 5" fill="none" stroke="#fff" stroke-width="1.500"/><path d="M6 13l4-1v4H6zM11 12l5-1v5h-5zM6 17h4v4l-4-1zM11 17h5v5l-5-1z" fill="#000"/></svg></button>
        <button class="app" aria-label="Explorer"><svg width="24" height="26" viewBox="0 0 24 26"><path d="M1 3h8l1 2h12v17H1z" fill="#ffe590"/><path d="M1 3h8v3H1z" fill="#f0b830"/><path d="M5 24v-9h14v9h-4v-5H9v5z" fill="#38a8e0"/></svg></button>
        <button class="app run" aria-label="Glodon"><svg width="26" height="30" viewBox="0 0 26 30"><path d="M22 4Q11 1 5 9q-5 10 2 16 8 4 14-2 3-5 1-11h-9q-1 3 1 5 3 2 3-1 0 5-5 4-4-2-2-9 4-5 12-7z" fill="#18a0f0"/></svg></button>
        <button class="app run lit" aria-label="Notes"><svg width="26" height="30" viewBox="0 0 26 30"><rect x="1" y="3" width="24" height="24" rx="2" fill="#f89818"/><path d="M4 6h14v18H4z" fill="#fff4d0"/><path d="M6 11h9M6 14h9M6 17h7M6 20h6" stroke="#b08030"/><path d="M23 2l3 2-9 15-3 2 0-4z" fill="#c05010" stroke="#fff" stroke-width=".5"/></svg></button>
        <button class="app run active" aria-label="GGJ2013"><svg width="24" height="28" viewBox="0 0 16 18"><use href="#logo" y="1" width="16" height="16"/></svg></button>
        <button class="app run" aria-label="Browser"><svg width="24" height="28" viewBox="0 0 24 28"><circle cx="12" cy="14" r="10" fill="#48b838"/><path d="M1 17Q3 3 21 2" fill="none" stroke="#b0e860" stroke-width="1.500"/><path d="M6 13l6-6 6 6zM6 15h12l-6 6z" fill="#fff"/></svg></button>
        <div class="tray">
            <div class="two cpu"><span>9%</span><span>CPU使用</span></div>
            <svg width="148" height="24" viewBox="0 0 148 24">
                <path d="M2 15l5-6 5 6" fill="none" stroke="#fff" stroke-width="1.300"/>
                <path d="M26 8v3M29 8v3M25 11h5v2q-3 2-5 0zM28 14v2" fill="#fff" stroke="#fff"/><path d="M31 9.500h9v7H29" fill="none" stroke="#fff"/><path d="M32 11h7v4h-7z" fill="#fff"/>
                <path d="M51 17Q52 8 62 7M54 18q1-6 8-7M57 18q1-3 5-4" fill="none" stroke="#aaa" stroke-width="1.300"/><circle cx="61" cy="17" r="1.500" fill="#fff"/>
                <path d="M72 10h3l3-3v11l-3-3h-3zM80 10q2 3 0 5M83 8q3 4 0 9M86 7q4 5 0 11" fill="none" stroke="#ddd"/>
                <path d="M97 18l5-12 5 12M99 14h7" fill="none" stroke="#fff" stroke-width="2"/>
                <path d="M124 6l13-2 1 13-12 3z" fill="#f05020"/><path d="M134 8q-6-1-6 2t6 2q1 4-6 3" fill="none" stroke="#fff" stroke-width="1.800"/>
            </svg>
            <div class="two clock"><span>15:26</span><span>2017/8/1</span></div>
            <div class="notice"><svg width="26" height="32" viewBox="0 0 26 32"><path d="M1 4h16v13H8l-3 4v-4H1z" fill="#fff"/><path d="M3 7h12M3 10h12M3 13h9" stroke="#000"/></svg><span class="badge">2</span></div>
        </div>
    </div>

    <script>
        // folder rows: name, open flag, children as [icon, label]
        const navData = [
            ["常用构件类型", true, [["axis", "轴网(J)"], ["raft", "筏板基础(M)"], ["col", "框柱(Z)"], ["wall", "剪力墙(Q)"], ["beam", "梁(L)"], ["slab", "现浇板(B)"]]],
            ["轴线"], ["柱"], ["墙"], ["门窗洞"], ["梁"], ["板"],
            ["基础", true, [["fbeam", "基础梁(F)"], ["raft", "筏板基础(M)"], ["pit", "集水坑(K)"], ["pier", "柱墩(Y)"], ["main", "筏板主筋(R)"], ["neg", "筏板负筋(X)"], ["iso", "独立基础(P)"], ["strip", "条形基础(T)"], ["cap", "桩承台(V)", "selected"], ["fbeam", "承台梁(F)"], ["pile", "桩(U)"], ["band", "基础板带(W)"]]],
            ["其它"],
            ["自定义", true, [["point", "自定义点"], ["line", "自定义线(X)", "fresh"], ["face", "自定义面"]]]
        ];
        const compNumbers = [17, 18, 19, 20, 21, 22, 23, 24, 25, 26, 27, 28, 29, 30, 31, 32, 33, 34, 35];
        const noChild = [18, 19, 26, 29];

        const icon = (id, cls) => `<svg class="${cls || "ico"}"><use href="#${id}"/></svg>`;
        const half = text => text.replace(/[ -~]+/g, "<b>$&</b>");
        const childRow = (guide, last, ico, text, extra) =>
            `<li><i class="guide ${guide ? "" : "none"}"></i><i class="elbow ${last ? "last" : ""}"></i><span class="item ${extra || ""}">${icon(ico)}<span>${half(text)}</span></span>${extra === "fresh" ? '<svg width="15" height="16"><path d="M.5 1.500h14v13H.5z" fill="#d8ecff" stroke="#2068b8"/><path d="M3 4h4v8H3zM9 4h4v8H9zM3 7h4M9 7h4M3 9h4M9 9h4" fill="#fff" stroke="#2088d8"/></svg><em>NEW</em>' : ""}</li>`;

        let navHtml = "";
        navData.forEach(([name, open, kids], n) => {
            navHtml += `<li>${icon(open ? "chev-open" : "chev-shut", "chev")}<i class="dash"></i><span class="item">${icon(open ? "folder-open" : "folder-shut")}<span>${name}</span></span></li>`;
            (kids || []).forEach((k, i) => {
                navHtml += childRow(n < navData.length - 1, i === kids.length - 1 && n < navData.length - 1, "i-" + k[0], k[1], k[2]);
            });
        });
        document.getElementById("nav-tree").innerHTML = navHtml;

        let compHtml = "";
        compNumbers.forEach(n => {
            if (noChild.includes(n)) {
                compHtml += `<li><i class="elbow root"></i><span class="item">${icon("gear")}<span>${half("CT-" + n)}</span></span></li>`;
                return;
            }
            compHtml += `<li>${icon("chev-open", "chev")}<i class="dash"></i><span class="item">${icon("gear")}<span>${half("CT-" + n)}</span></span></li>`;
            compHtml += childRow(n !== 35, true, "gear", `(底)CT-${n}-1`, n === 35 ? "selected" : "");
        });
        document.getElementById("comp-tree").innerHTML = compHtml;

        let rows = "";
        for (let i = 1; i <= 11; i++) {
            rows += `<tr><th class="${i === 1 ? "current" : ""}">${i}</th><td class="${i === 1 ? "picked" : ""}">${i === 11 ? '<span class="plus">+</span>' : ""}</td><td></td><td></td></tr>`;
        }
        document.getElementById("prop-rows").innerHTML = rows;
    </script>

</body>
</html>
```

FILE: styles.css
```css
* {
    box-sizing: border-box;
}
body {
    margin: 0;
    height: 100vh;
    display: flex;
    flex-direction: column;
    overflow: hidden;
    background: #f0f0f0;
    color: #000;
    font: 12px/16px "Open Sans", "Noto Sans CJK SC", sans-serif;
}
button, input, select {
    font: inherit;
    color: inherit;
}
button {
    border: 0;
    padding: 0;
    background: none;
    white-space: nowrap;
}
svg {
    flex: none;
    display: block;
}
.sprite {
    position: absolute;
}
.ico {
    width: 16px;
    height: 16px;
}

/* title bar */
.titlebar {
    position: relative;
    flex: 0 0 23px;
    display: flex;
    align-items: center;
    padding: 0 2px;
    background: #fff;
    color: #8c8c8c;
}
.caption {
    flex: 1;
    margin-left: 5px;
    font: 13px/20px Roboto, "Noto Sans CJK SC", sans-serif;
    white-space: nowrap;
    overflow: hidden;
}
.win-btn {
    width: 46px;
    height: 22px;
    display: flex;
    align-items: center;
    justify-content: center;
}
.blob {
    position: absolute;
    top: 0;
    right: 241px;
    width: 46px;
    height: 5px;
    background: #40c860;
    border-radius: 0 0 12px 12px;
}
.ime {
    position: absolute;
    top: 3px;
    right: 182px;
    z-index: 3;
    width: 160px;
    height: 24px;
    display: flex;
    align-items: center;
    justify-content: flex-end;
    background: #fff;
    border: 1px solid #a8c0dc;
}
.ime-logo {
    position: absolute;
    left: -24px;
    top: -4px;
}

/* menus and toolbars */
.menubar {
    flex: 0 0 30px;
    display: flex;
    align-items: center;
    gap: 11px;
    padding-left: 7px;
}
.menubar .tool {
    padding: 0;
}
.menubar .change {
    margin-left: 5px;
    margin-right: -6px;
}
.account {
    flex: 1;
    display: flex;
    align-items: center;
    height: 28px;
    padding-left: 25px;
    background: #f6f6f6;
}
.news {
    width: 164px;
    color: #106c6c;
    text-decoration: none;
}
.account .phone {
    margin-right: 8px;
}
.bell {
    margin-left: 8px;
}
.more {
    margin-left: auto;
    align-self: flex-start;
    padding: 2px 5px 0 0;
    font: bold 14px/14px "Liberation Sans", sans-serif;
}
.toolbars {
    flex: 0 0 30px;
    display: flex;
    gap: 2px;
}
.toolbar {
    display: flex;
    align-items: center;
    height: 28px;
    border-radius: 3px;
    background: linear-gradient(#fbfbfb, #eeeeee);
    white-space: nowrap;
}
.bar-file {
    flex: 0 0 151px;
}
.bar-draw {
    flex: 0 0 549px;
}
.bar-view {
    flex: 1;
    min-width: 0;
    padding-left: 1px;
}
.tool {
    display: flex;
    align-items: center;
    gap: 4px;
    padding: 0 3px 0 4px;
}
.off {
    color: #808080;
}
.boxed {
    height: 23px;
    padding: 0 2px 0 1px;
    border: 1px solid #707070;
}
.caret {
    width: 7px;
    height: 4px;
    margin: 0 0 0 2px;
    background: currentColor;
    clip-path: polygon(0 0, 100% 0, 50% 100%);
}
.tight .caret {
    margin: 0 0 0 -2px;
}
.sep {
    width: 1px;
    height: 18px;
    margin: 0 1px 0 4px;
    background: #b4b4b4;
}
.bar-file .tool {
    padding: 0 3px 0 5px;
}
.combo {
    display: flex;
    align-items: center;
    width: 61px;
    height: 24px;
    margin-left: 6px;
    background: #fff;
}
.combo select {
    width: 50px;
    padding: 0 2px;
    border: 0;
    appearance: none;
    background: none;
}
.combo .caret {
    margin: 0;
}

.workspace {
    flex: 1;
    min-height: 0;
    display: flex;
}
.right-side {
    flex: 1;
    min-width: 0;
    display: flex;
    flex-direction: column;
    padding-left: 6px;
}
.panels {
    flex: 1;
    min-height: 0;
    display: flex;
    gap: 4px;
}

/* navigation panel */
.nav-panel {
    flex: 0 0 229px;
    display: flex;
    flex-direction: column;
}
.nav-head {
    display: flex;
    align-items: center;
    justify-content: space-between;
    height: 16px;
    margin: 1px 0 1px;
    padding-right: 3px;
    border: 1px solid #808080;
    border-left: 0;
    font-size: 13px;
    line-height: 14px;
}
.nav-btn {
    height: 22px;
    flex: none;
    background: #f0f0f0;
    border: 1px solid #a0a0a0;
    border-top-color: #fff;
    box-shadow: 0 -1px #a0a0a0;
}
.nav-tools {
    height: 27px;
    padding: 7px 7px 0;
    background: linear-gradient(#fcfcfc, #f2f2f2);
}
.tree-box {
    flex: 1;
    min-height: 0;
    display: flex;
    overflow: hidden;
    background: #fff;
    border: 1px solid #828790;
    border-right-width: 2px;
}
.nav-panel .tree-box {
    margin: 0 0 2px 2px;
}
.tree {
    flex: 1;
    margin: 0;
    padding: 1px 0 0 5px;
    list-style: none;
    overflow: hidden;
}
#comp-tree {
    padding: 0 0 0 23px;
}
.tree li {
    display: flex;
    height: 16px;
    white-space: nowrap;
}
.item {
    display: flex;
    gap: 5px;
}
#comp-tree .guide ~ .item {
    gap: 7px;
    padding-right: 4px;
}
.tree b, .statusbar b {
    font: 10px "DejaVu Sans Mono", monospace;
}
.chev {
    width: 14px;
    height: 16px;
}
.dash {
    width: 4px;
    height: 9px;
    border-bottom: 1px dotted #808080;
}
.guide, .elbow {
    background-repeat: no-repeat;
    background-image: repeating-linear-gradient(#808080 0 1px, transparent 1px 2px), repeating-linear-gradient(90deg, #808080 0 1px, transparent 1px 2px);
}
.guide {
    width: 19px;
    margin-right: 7px;
    background-position: 7px 0;
    background-size: 1px 100%, 0 0;
}
.guide.none {
    background: none;
}
.elbow {
    width: 11px;
    background-position: 0 0, 0 8px;
    background-size: 1px 100%, 100% 1px;
}
.elbow.last {
    background-size: 1px 8px, 100% 1px;
}
.elbow.root {
    margin-left: 7px;
}
#nav-tree .selected {
    background: #d9d9d9;
    padding-right: 5px;
}
#comp-tree .selected {
    background: #316ac5;
}
.tree em {
    height: 9px;
    margin: 1px 0 0 2px;
    background: #ffe000;
    font: bold 8px/9px "DejaVu Sans", sans-serif;
}
.scroll {
    flex: 0 0 15px;
    display: flex;
    flex-direction: column;
    justify-content: space-between;
    margin: 1px 2px 1px 0;
    background: #f0f0f0;
}
.thumb {
    background: #cdcdcd;
}
.nav-scroll .thumb {
    flex: 0 1 422px;
    margin-bottom: auto;
}
.comp-scroll .thumb {
    flex: 0 1 298px;
    margin-top: auto;
}

/* component list */
.comp-panel {
    flex: 0 0 183px;
    min-width: 0;
    display: flex;
    flex-direction: column;
    padding-top: 5px;
}
.search-row {
    display: flex;
    height: 27px;
    padding: 0 2px 2px 1px;
    background: #fff;
}
.search-row input {
    flex: 1;
    min-width: 0;
    height: 24px;
    padding: 0 2px 2px;
    border: 1px solid #707070;
    border-radius: 0;
}
.search-row input::placeholder {
    color: #808080;
}
.search-row button {
    width: 23px;
    padding-left: 4px;
}

/* property editor */
.prop-panel {
    position: relative;
    flex: 1;
    min-width: 0;
    display: flex;
    flex-direction: column;
    background: #fff;
    border: 1px solid #d8d8d8;
}
.tabs {
    height: 20px;
    border-bottom: 1px solid #d8d8d8;
}
.tab {
    height: 20px;
    padding: 0 7px;
    background: #fff;
    border-right: 1px solid #d8d8d8;
}
.prop-box {
    flex: 1;
    min-height: 0;
    margin: 3px 3px 3px 4px;
    border: 1px solid #a8a8a8;
    padding-top: 1px;
    overflow: hidden;
}
.props {
    border-collapse: collapse;
    table-layout: fixed;
    width: 370px;
}
.props th, .props td {
    height: 19px;
    padding: 0;
    border-right: 1px solid #c0c0c0;
    border-bottom: 1px solid #c0c0c0;
    font-weight: normal;
    text-align: center;
}
.props td {
    text-align: left;
}
.props tbody th {
    line-height: 16px;
    font-family: "DejaVu Sans", sans-serif;
    font-size: 10px;
    background: linear-gradient(#fff, #eee);
}
.props thead th {
    height: 23px;
    background: linear-gradient(#fff, #f0f0f0);
}
.num { width: 22px; }
.name { width: 190px; }
.val { width: 127px; }
.props thead .val {
    background: linear-gradient(#f9d9a0, #f3c368);
    color: #600050;
}
.props tbody .current {
    background: #ffd08c;
    color: #600050;
}
.props .picked {
    background: #0078d7;
}
.plus {
    display: block;
    width: 13px;
    height: 13px;
    margin-left: 2px;
    border: 1px solid #888;
    line-height: 10px;
    text-align: center;
}

/* parameter window */
.dialog {
    position: absolute;
    top: 45px;
    left: 35px;
    right: 21px;
    bottom: 2px;
    display: flex;
    flex-direction: column;
    padding: 0 7px 7px;
    background: linear-gradient(#99b4d1, #b9d1ea 30px);
    border: 1px solid #202020;
    box-shadow: inset 0 -1px #40c8f0, inset -1px 0 #40c8f0, inset 1px 0 #e8f4ff;
}
.dialog-title {
    flex: 0 0 30px;
    padding-top: 10px;
}
.radios {
    flex: 0 0 34px;
    display: flex;
    align-items: center;
    background: #f0f0f0;
    border: 1px solid #fff;
    border-bottom-color: #a0a0a0;
}
.radios label {
    flex: 0 0 41%;
    display: flex;
    align-items: center;
    gap: 3px;
}
.radios label:first-child {
    margin-left: 15%;
}
.radios input {
    width: 13px;
    height: 13px;
    margin: 0;
    appearance: none;
    border: 1px solid #333;
    border-radius: 50%;
    background: #fff;
}
.radios input:checked {
    background: radial-gradient(#333 0 3px, #fff 4px);
}
.drawing {
    flex: 1;
    min-height: 0;
    width: 100%;
    background: #000;
}
.drawing path, .drawing circle {
    fill: none;
    stroke-width: 1px;
    shape-rendering: crispEdges;
}
.drawing .w * { stroke: #fff; }
.drawing .m { stroke: #f0f; stroke-width: 2px; }
.drawing .r { stroke: #f00; stroke-width: 2px; }
.drawing .c { stroke: #0ff; stroke-width: 2px; }
.drawing .g { stroke: #0f0; stroke-width: 2px; }
.drawing .y { stroke: #ff0; stroke-width: 2px; }
.drawing .dots-c circle { fill: #0ff; }
.drawing .dots-g circle { fill: #0f0; }
.drawing .dots-y circle { fill: #ff0; }
.zh {
    fill: #fff;
    font: 300 15px "Noto Sans CJK SC", sans-serif;
}
.title { font-size: 37px; }
.title2 { font-size: 30px; }
.en {
    fill: #0f0;
    font: 13px "Liberation Mono", monospace;
}
.big {
    fill: #fff;
    font: 38px "Liberation Serif", serif;
    text-anchor: middle;
}
.dialog-foot {
    flex: 0 0 44px;
    display: flex;
    justify-content: flex-end;
    align-items: center;
    padding-right: 26px;
    background: #f0f0f0;
    border-bottom: 1px solid #a0a0a0;
}
.dialog-foot button {
    width: 73px;
    height: 23px;
    background: #e1e1e1;
    border: 1px solid #adadad;
}

/* status bar */
.statusbar {
    flex: 0 0 23px;
    display: flex;
    gap: 3px;
    padding-top: 3px;
}
.statusbar span {
    padding: 1px 0 0 1px;
    border: 1px solid #d4d4d4;
    background: linear-gradient(#fff, #f2f2f2);
    white-space: nowrap;
}
.s1 { flex: 0 0 147px; }
.s2 { flex: 0 0 78px; }
.s3 { flex: 0 0 96px; }
.s4 { flex: 0 0 47px; }
.s5 { flex: 1; }
.s6 { flex: 0 0 70px; }

/* taskbar */
.taskbar {
    flex: 0 0 40px;
    display: flex;
    background: linear-gradient(90deg, #000808, #00100f 95%, #000 95%);
    color: #fff;
}
.start {
    width: 48px;
    padding-left: 16px;
    background: #000;
}
.cortana {
    flex: 0 0 344px;
    display: flex;
    align-items: center;
    gap: 5px;
    padding: 0 14px 0 9px;
    background: #333;
}
.cortana input {
    flex: 1;
    min-width: 0;
    padding: 0;
    border: 0;
    background: none;
    font-size: 14px;
}
.cortana input::placeholder {
    color: #a0a0a0;
}
.app {
    position: relative;
    width: 47px;
    margin: 0 2px 0 1px;
    display: flex;
    align-items: center;
    justify-content: center;
}
.app:nth-of-type(2) {
    margin-left: 3px;
}
.run {
    box-shadow: inset 0 -2px #76b9ed;
}
.lit {
    background-color: #283030;
}
.active {
    background-color: #3a4446;
}
.tray {
    margin-left: auto;
    display: flex;
    align-items: center;
}
.two {
    display: flex;
    flex-direction: column;
    align-items: center;
    line-height: 18px;
}
.cpu {
    margin-right: 19px;
}
.clock {
    width: 54px;
    margin: 0 22px 0 10px;
}
.notice {
    position: relative;
    width: 42px;
}
.badge {
    position: absolute;
    left: 7px;
    top: 14px;
    width: 16px;
    height: 16px;
    border: 1px solid #999;
    border-radius: 50%;
    background: #333;
    font-weight: bold;
    line-height: 14px;
    text-align: center;
}
```
